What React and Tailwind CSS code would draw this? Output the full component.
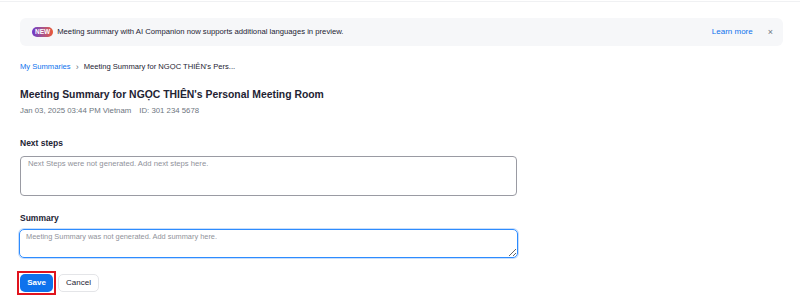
import { useState } from 'react';

export default function App() {
    const [nextSteps, setNextSteps] = useState('');
    const [summary, setSummary] = useState('');

    return (
        <div className="w-[800px] h-[303px] bg-white overflow-hidden text-[#232333]" style={{ fontFamily: '"Liberation Sans", Arial, sans-serif' }}>
            <div className="h-[2px] border-b border-[#f0f1f3]" />

            <div className="pl-5 pr-[17px] pt-4">
                <div className="h-[28px] rounded-md bg-[#f6f7f9] flex items-center pl-3 pr-[10px]">
                    <span className="h-[10px] px-[3px] rounded-full bg-gradient-to-r from-[#6d33c9] to-[#e9552c] text-white text-[6.5px] font-bold leading-none flex items-center">NEW</span>
                    <span className="ml-[4px] text-[7.7px] text-[#232333]">Meeting summary with AI Companion now supports additional languages in preview.</span>
                    <a className="ml-auto text-[8px] text-[#0e72ed]">Learn more</a>
                    <button className="ml-[15px] text-[9px] text-[#6e7680] leading-none">×</button>
                </div>
            </div>

            <div className="px-5">
                <div className="mt-[15px] flex items-center gap-[5px] text-[7.6px] leading-[12px]">
                    <a className="text-[#0e72ed]">My Summaries</a>
                    <span className="text-[#6e7680] text-[9px]">›</span>
                    <span className="text-[#232333]">Meeting Summary for NGỌC THIÊN's Pers...</span>
                </div>

                <h1 className="mt-[15px] text-[10.4px] font-bold leading-[14px]">Meeting Summary for NGỌC THIÊN's Personal Meeting Room</h1>
                <div className="mt-[3px] flex gap-[8px] text-[7.8px] leading-[12px] text-[#6e7680]">
                    <span>Jan 03, 2025 03:44 PM Vietnam</span>
                    <span>ID: 301 234 5678</span>
                </div>

                <div className="mt-[20px] text-[8.5px] font-bold leading-[12px]">Next steps</div>
                <textarea
                    value={nextSteps}
                    onChange={(e) => setNextSteps(e.target.value)}
                    placeholder="Next Steps were not generated. Add next steps here."
                    className="mt-[7px] block w-[497px] h-[40px] rounded-[4px] border border-[#9a9ba3] px-[7px] py-[1px] text-[7.7px] leading-[12px] placeholder:text-[#8f929a] resize-none outline-none"
                />

                <div className="mt-[16px] text-[8.5px] font-bold leading-[12px]">Summary</div>
                <textarea
                    value={summary}
                    onChange={(e) => setSummary(e.target.value)}
                    placeholder="Meeting Summary was not generated. Add summary here."
                    className="mt-[5px] -ml-px block w-[499px] h-[29px] rounded-[5px] border-[1.5px] border-[#2d8cff] ring-1 ring-[#c9defb] px-[6px] py-[1px] text-[7.4px] leading-[12px] placeholder:text-[#8f929a] outline-none"
                />

                <div className="mt-[13px] flex items-center gap-[2px]">
                    <div className="-ml-[3px] flex border-2 border-[#e0141e] p-px">
                        <button className="h-[18px] w-[33px] rounded-[5px] bg-[#0e72ed] text-white text-[8px] font-bold leading-none">Save</button>
                    </div>
                    <button className="h-[18px] w-[41px] rounded-[5px] border border-[#e4e5e8] bg-white text-[8px] font-medium leading-none text-[#232333]">Cancel</button>
                </div>
            </div>
        </div>
    );
}
